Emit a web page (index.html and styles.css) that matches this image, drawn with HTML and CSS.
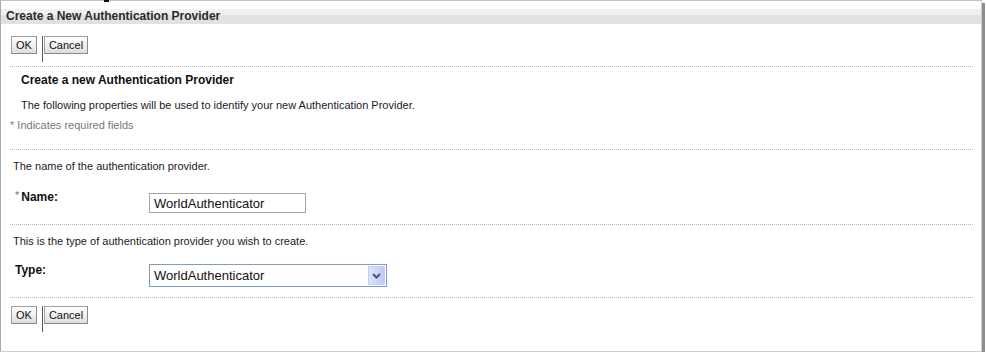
FILE: index.html
```html
<!DOCTYPE html>
<html>
<head>
<meta charset="utf-8">
<title>Create a New Authentication Provider</title>
<link rel="stylesheet" href="styles.css">
</head>
<body>
<span class="cursor-mark"></span>
<div class="panel">
  <div class="titlebar">Create a New Authentication Provider</div>

  <div class="toolbar toolbar-top">
    <button class="btn" type="button">OK</button>
    <span class="btn-sep"></span>
    <button class="btn" type="button">Cancel</button>
  </div>

  <div class="section intro">
    <div class="heading">Create a new Authentication Provider</div>
    <div class="desc">The following properties will be used to identify your new Authentication Provider.</div>
    <div class="required"><span class="req-star">*</span> Indicates required fields</div>
  </div>

  <div class="section name-sec">
    <div class="help">The name of the authentication provider.</div>
    <div class="field-row name-row">
      <label class="field-label"><span class="label-star">*</span>Name:</label>
      <input class="text-input" type="text" value="WorldAuthenticator">
    </div>
  </div>

  <div class="section type-sec">
    <div class="help">This is the type of authentication provider you wish to create.</div>
    <div class="field-row type-row">
      <label class="field-label plain">Type:</label>
      <div class="select-box">
        <span class="select-value">WorldAuthenticator</span>
        <span class="select-arrow">
          <svg width="9" height="6" viewBox="0 0 9 6"><path d="M1 1 L4.5 4.5 L8 1" fill="none" stroke="#3f5882" stroke-width="2"/></svg>
        </span>
      </div>
    </div>
  </div>

  <div class="section bottom-sec">
    <div class="toolbar toolbar-bottom">
      <button class="btn" type="button">OK</button>
      <span class="btn-sep"></span>
      <button class="btn" type="button">Cancel</button>
    </div>
  </div>
</div>
</body>
</html>
```

FILE: styles.css
```css
html, body {
  margin: 0;
  padding: 0;
  background: #ffffff;
}

body {
  font-family: "Liberation Sans", Arial, sans-serif;
  font-size: 11px;
  color: #111111;
  position: relative;
}

.cursor-mark {
  position: absolute;
  left: 104px;
  top: 0;
  width: 5px;
  height: 2px;
  background: #111;
}

.panel {
  box-sizing: border-box;
  width: 982px;
  height: 352px;
  border-top: 1px solid #c4c4c4;
  border-left: 1px solid #a9a9a9;
  border-right: 1px solid #cfcfcf;
  border-bottom: 1px solid #cfcfcf;
  box-shadow: 3px 3px 0 #8e8e8e;
  background: #ffffff;
  margin-top: 0;
}

.titlebar {
  height: 23px;
  box-sizing: border-box;
  padding: 8px 0 0 5px;
  font-weight: bold;
  font-size: 12px;
  line-height: 14px;
  color: #2b2b2b;
  background: linear-gradient(to bottom, #ffffff 0, #ffffff 8px, #f1f1f1 8px, #f1f1f1 13px, #e9e9e9 14px, #e1e1e1 15px, #e1e1e1 100%);
}

.toolbar {
  display: flex;
  align-items: flex-start;
  padding-left: 10px;
}

.toolbar-top {
  margin-top: 12px;
  height: 26px;
}

.btn {
  box-sizing: border-box;
  height: 18px;
  margin: 0;
  padding: 0 4px;
  border: 1px solid #a0a0a0;
  border-right-color: #8a8a8a;
  border-bottom-color: #8a8a8a;
  background: linear-gradient(to bottom, #ffffff 0%, #f2f2f2 45%, #dcdcdc 100%);
  font-family: "Liberation Sans", Arial, sans-serif;
  font-size: 11px;
  line-height: 15px;
  color: #111;
}

.btn-sep {
  width: 1px;
  height: 26px;
  background: #5a5a5a;
  margin: 0 1px 0 5px;
}

.section {
  margin-left: 9px;
  margin-right: 8px;
  border-top: 1px dotted #b4b4b4;
}

.toolbar-top + .section {
  margin-top: 4px;
}

.intro {
  padding: 6px 0 17px 0;
}

.heading {
  padding-left: 11px;
  font-weight: bold;
  font-size: 12px;
  line-height: 14px;
  color: #111;
}

.desc {
  padding-left: 11px;
  margin-top: 11px;
  line-height: 14px;
  color: #1a1a2a;
}

.required {
  margin-top: 6px;
  line-height: 14px;
  color: #777777;
}

.req-star {
  color: #8a7e70;
}

.help {
  padding-left: 3px;
  line-height: 14px;
  color: #1a1a2a;
}

.name-sec {
  padding: 9px 0 11px 0;
}

.type-sec {
  padding: 9px 0 10px 0;
}

.field-row {
  display: flex;
  align-items: flex-start;
}

.name-row {
  margin-top: 17px;
}

.type-row {
  margin-top: 15px;
}

.field-label {
  box-sizing: border-box;
  width: 139px;
  padding-left: 5px;
  font-weight: bold;
  font-size: 12px;
  line-height: 14px;
  color: #111;
}

.label-star {
  font-weight: normal;
  font-size: 11px;
  color: #777;
  margin-right: 2px;
  position: relative;
  top: -2px;
}

.text-input {
  box-sizing: border-box;
  width: 157px;
  height: 20px;
  margin: 3px 0 0 0;
  padding: 0 0 0 4px;
  border: 1px solid #a7a7a7;
  font-family: "Liberation Sans", Arial, sans-serif;
  font-size: 13px;
  color: #111;
  background: #fff;
  outline: none;
}

.select-box {
  box-sizing: border-box;
  width: 238px;
  height: 23px;
  margin-top: 1px;
  border: 1px solid #7f9db9;
  display: flex;
  align-items: center;
  justify-content: space-between;
  padding: 0 1px 0 4px;
  background: #fff;
}

.select-value {
  font-size: 13px;
  line-height: 16px;
  color: #111;
}

.select-arrow {
  box-sizing: border-box;
  width: 17px;
  height: 19px;
  border: 1px solid #c3cff2;
  background: linear-gradient(to right, #dde2fc 0%, #ccd5f7 60%, #bccbf0 100%);
  display: flex;
  align-items: center;
  justify-content: center;
}

.bottom-sec {
  padding-top: 8px;
}

.toolbar-bottom {
  padding-left: 1px;
}
```
